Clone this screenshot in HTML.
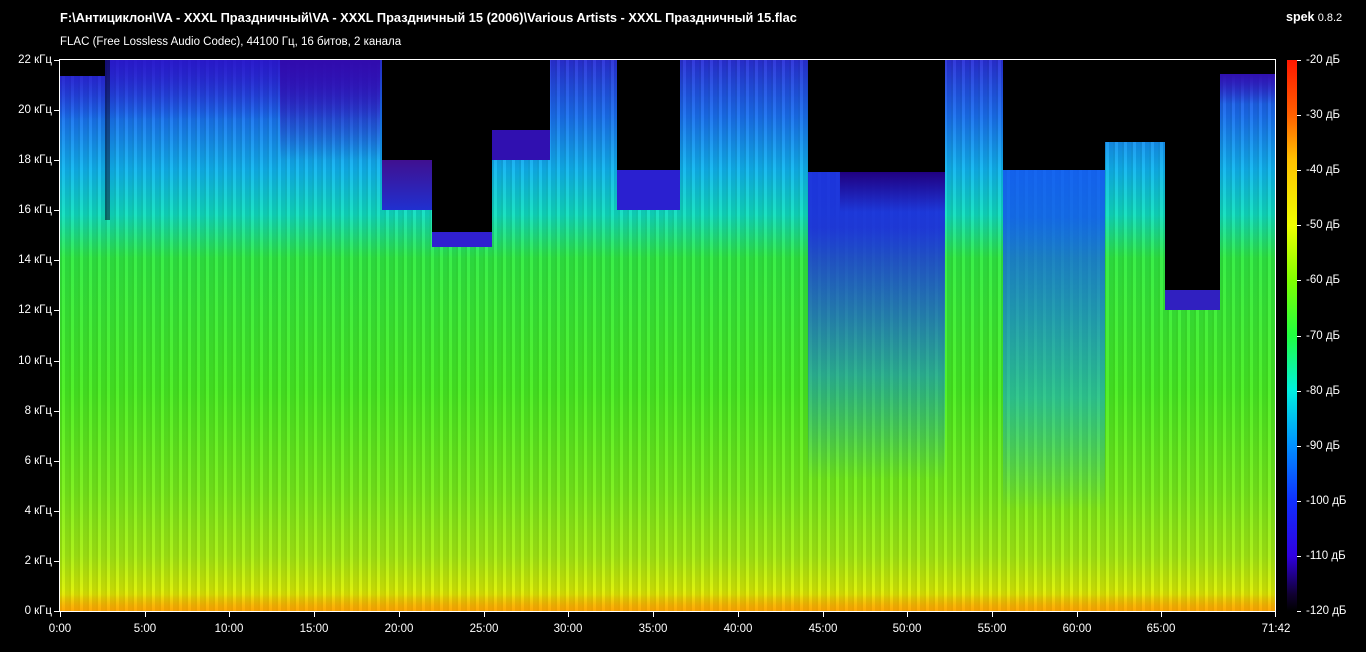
<!DOCTYPE html>
<html><head><meta charset="utf-8"><style>
body{margin:0;width:1366px;height:652px;background:#000;position:relative;overflow:hidden;font-family:"Liberation Sans","DejaVu Sans",sans-serif;color:#fff}
.t{position:absolute;font-size:11.5px;white-space:nowrap}
#plot{position:absolute;left:60px;top:60px;width:1215px;height:551px;overflow:hidden;
background:linear-gradient(to bottom,#2a30d8 0%,#1a70f0 10%,#10b8f0 20%,#10e0c0 28%,#30ee40 36%,#48f020 60%,#78f018 78%,#a8f010 90%,#e0f000 97%,#ffa000 100%)}
.s{position:absolute;top:0}
.blk{background:#000}
.ov{position:absolute;top:0}
#cb{position:absolute;left:1287px;top:60px;width:10px;height:551px;background:linear-gradient(to bottom,#ff1800 0%,#ff6000 10%,#ffc000 18%,#f0ff00 30%,#80ff00 40%,#20ff40 50%,#00f0e0 60%,#0090ff 70%,#1030ff 80%,#3000e0 90%,#100030 97%,#000 100%)}
.tk{position:absolute;background:#fff}
</style></head><body>
<div class="t" style="left:60px;top:10px;font-weight:bold;font-size:12.8px">F:\Антициклон\VA - XXXL Праздничный\VA - XXXL Праздничный 15 (2006)\Various Artists - XXXL Праздничный 15.flac</div>
<div class="t" style="left:60px;top:36px">FLAC (Free Lossless Audio Codec), 44100 Гц, 16 битов, 2 канала</div>
<div class="t" style="left:1286px;top:10px"><b style="font-size:12.5px">spek</b> <span style="font-size:11px">0.8.2</span></div>

<div id="plot">
<div style="position:absolute;inset:0;background:repeating-linear-gradient(90deg,rgba(0,0,0,.12) 0 2px,rgba(255,255,255,.05) 2px 5px,rgba(0,0,40,.1) 5px 9px)"></div>
<div class="ov" style="left:748px;width:137px;height:420px;background:linear-gradient(to bottom,rgba(30,40,220,.9) 40%,rgba(20,120,240,.5) 75%,rgba(0,0,0,0))"></div>
<div class="ov" style="left:943px;width:102px;height:450px;background:linear-gradient(to bottom,rgba(20,80,240,.8) 35%,rgba(20,160,240,.5) 75%,rgba(0,0,0,0))"></div>
<div class="ov" style="left:0;width:320px;height:60px;background:linear-gradient(to bottom,rgba(40,20,200,.8),rgba(0,0,0,0))"></div>
<div class="ov" style="left:220px;width:100px;height:100px;background:linear-gradient(to bottom,rgba(50,10,170,.9),rgba(0,0,0,0))"></div>
<div class="s blk" style="left:0;width:45px;height:16px"></div>
<div class="s" style="left:45px;width:5px;height:160px;background:rgba(0,0,30,.5)"></div>
<div class="s blk" style="left:322px;width:50px;height:100px"></div>
<div class="ov" style="left:322px;top:100px;width:50px;height:50px;background:linear-gradient(#401090,#2030d0)"></div>
<div class="s blk" style="left:372px;width:60px;height:172px"></div>
<div class="ov" style="left:372px;top:172px;width:60px;height:15px;background:#3020d0"></div>
<div class="s blk" style="left:432px;width:58px;height:70px"></div>
<div class="ov" style="left:432px;top:70px;width:58px;height:30px;background:#3010b0"></div>
<div class="s blk" style="left:557px;width:63px;height:110px"></div>
<div class="ov" style="left:557px;top:110px;width:63px;height:40px;background:#2a20d0"></div>
<div class="s blk" style="left:748px;width:137px;height:112px"></div>
<div class="ov" style="left:780px;top:112px;width:105px;height:40px;background:linear-gradient(#200080,rgba(30,30,200,0))"></div>
<div class="s blk" style="left:943px;width:102px;height:110px"></div>
<div class="s blk" style="left:1045px;width:60px;height:82px"></div>
<div class="s blk" style="left:1105px;width:55px;height:230px"></div>
<div class="ov" style="left:1105px;top:230px;width:55px;height:20px;background:#3020c0"></div>
<div class="s blk" style="left:1160px;width:55px;height:14px"></div>
<div class="ov" style="left:1160px;top:14px;width:55px;height:30px;background:linear-gradient(#3010b0,rgba(30,30,200,0))"></div>
<div class="ov" style="left:0;top:530px;width:1215px;height:21px;background:linear-gradient(rgba(255,200,0,0),rgba(255,170,0,.5))"></div>
</div>
<div class="tk" style="left:59px;top:59px;width:1217px;height:1px"></div>
<div class="tk" style="left:59px;top:611px;width:1217px;height:1px"></div>
<div class="tk" style="left:59px;top:59px;width:1px;height:553px"></div>
<div class="tk" style="left:1275px;top:59px;width:1px;height:553px"></div>
<div id="cb"></div>

<div id="ax"></div>
<script>
var h='';
var fl=['0','2','4','6','8','10','12','14','16','18','20','22'];
for(var i=0;i<12;i++){var y=611-i*50.1;h+='<div class="tk" style="left:54px;top:'+Math.round(y)+'px;width:5px;height:1px"></div><div class="t" style="right:1314px;top:'+Math.round(y-6)+'px">'+fl[i]+' кГц</div>';}
for(var i=0;i<14;i++){var x=60+i*84.73;h+='<div class="tk" style="left:'+Math.round(x)+'px;top:612px;width:1px;height:5px"></div><div class="t" style="left:'+Math.round(x-20)+'px;width:40px;text-align:center;top:623px">'+(i*5)+':00</div>';}
h+='<div class="tk" style="left:1275px;top:612px;width:1px;height:5px"></div><div class="t" style="left:1256px;top:623px;width:40px;text-align:center">71:42</div>';
for(var i=0;i<11;i++){var y=60+i*55.1;h+='<div class="tk" style="left:1297px;top:'+Math.round(y)+'px;width:4px;height:1px"></div><div class="t" style="left:1306px;top:'+Math.round(y-6)+'px">-'+(20+i*10)+' дБ</div>';}
document.getElementById('ax').innerHTML=h;
</script>
</body></html>
